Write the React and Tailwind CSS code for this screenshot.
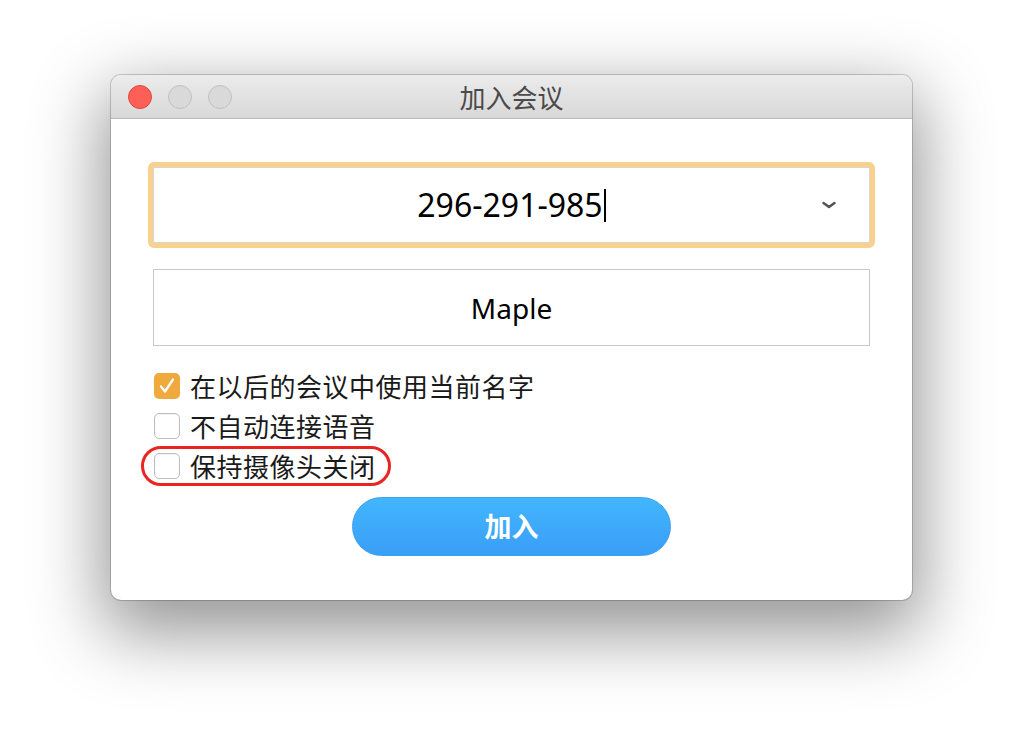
import { useState } from 'react';

const font = { fontFamily: '"Noto Sans CJK SC", "Noto Sans", sans-serif' };

function Check({ checked, label }) {
  return (
    <div className="flex items-center h-[40px]">
      {checked ? (
        <span className="w-[26px] h-[26px] rounded-[5px] bg-[#f0a93c] flex items-center justify-center">
          <svg width="22" height="22" viewBox="0 0 22 22" fill="none">
            <path d="M5 11.5l4 5L17 4.5" stroke="white" strokeWidth="2.3" strokeLinecap="round" strokeLinejoin="round" />
          </svg>
        </span>
      ) : (
        <span className="w-[26px] h-[26px] rounded-[5px] border border-[#bdbdbd] bg-white shadow-[inset_0_1px_1px_rgba(0,0,0,0.05)]" />
      )}
      <span className="ml-[10px] text-[26px] tracking-[0.5px] text-[#1a1a1a] leading-none">{label}</span>
    </div>
  );
}

export default function App() {
  const [name] = useState('Maple');
  return (
    <div className="w-[1024px] h-[748px] bg-white pt-[75px] pl-[111px] overflow-hidden" style={font}>
      <div className="w-[801px] h-[525px] rounded-[10px] bg-white shadow-[0_25px_70px_8px_rgba(0,0,0,0.42),0_0_0_1px_rgba(0,0,0,0.18)] overflow-hidden flex flex-col">
        {/* Title bar */}
        <div className="h-[44px] bg-gradient-to-b from-[#ececec] to-[#d8d8d8] border-b border-[#b9b9b9] flex items-center relative">
          <div className="flex items-center gap-[16px] pl-[17px]">
            <span className="w-[24px] h-[24px] rounded-full bg-[#fe5f57] border border-[#e2463f]" />
            <span className="w-[24px] h-[24px] rounded-full bg-[#d9d9d9] border border-[#c0c0c0]" />
            <span className="w-[24px] h-[24px] rounded-full bg-[#d9d9d9] border border-[#c0c0c0]" />
          </div>
          <div className="absolute inset-0 flex items-center justify-center text-[26px] text-[#4a4a4a] pointer-events-none">
            加入会议
          </div>
        </div>

        {/* Body */}
        <div className="flex-1 px-[37px] pt-[43px]">
          <div className="rounded-[6px] border-[5px] border-[#f8d18c]">
            <div className="h-[76px] border border-[#d6d6d6] bg-white relative flex items-center justify-center">
              <span className="text-[32px] text-black leading-none flex items-center" style={{ fontFamily: '"Noto Sans", sans-serif' }}>
                296-291-985
                <span className="w-[2px] h-[33px] bg-black ml-[1px]" />
              </span>
              <svg className="absolute right-[32px] top-1/2 -translate-y-1/2" width="16" height="10" viewBox="0 0 16 10" fill="none">
                <path d="M2.5 3l5.5 4 5.5-4" stroke="#555" strokeWidth="2.6" strokeLinecap="round" strokeLinejoin="round" />
              </svg>
            </div>
          </div>

          <div className="mt-[21px] mx-[5px] h-[77px] border border-[#c8c8c8] bg-white flex items-center justify-center">
            <span className="text-[28px] text-black leading-none" style={{ fontFamily: '"Noto Sans", sans-serif' }}>{name}</span>
          </div>

          <div className="mt-[20px] ml-[6px] flex flex-col">
            <Check checked label="在以后的会议中使用当前名字" />
            <Check label="不自动连接语音" />
            <div className="relative">
              <Check label="保持摄像头关闭" />
              <div className="absolute left-[-13px] top-0 w-[250px] h-[40px] rounded-full border-[3px] border-[#ea2420]" />
            </div>
          </div>

          <div className="flex justify-center mt-[11px]">
            <button className="w-[319px] h-[59px] rounded-full bg-gradient-to-b from-[#42b6fe] to-[#3a9ef6] border border-[#3aa0f0] text-white text-[27px] font-bold">
              加入
            </button>
          </div>
        </div>
      </div>
    </div>
  );
}
